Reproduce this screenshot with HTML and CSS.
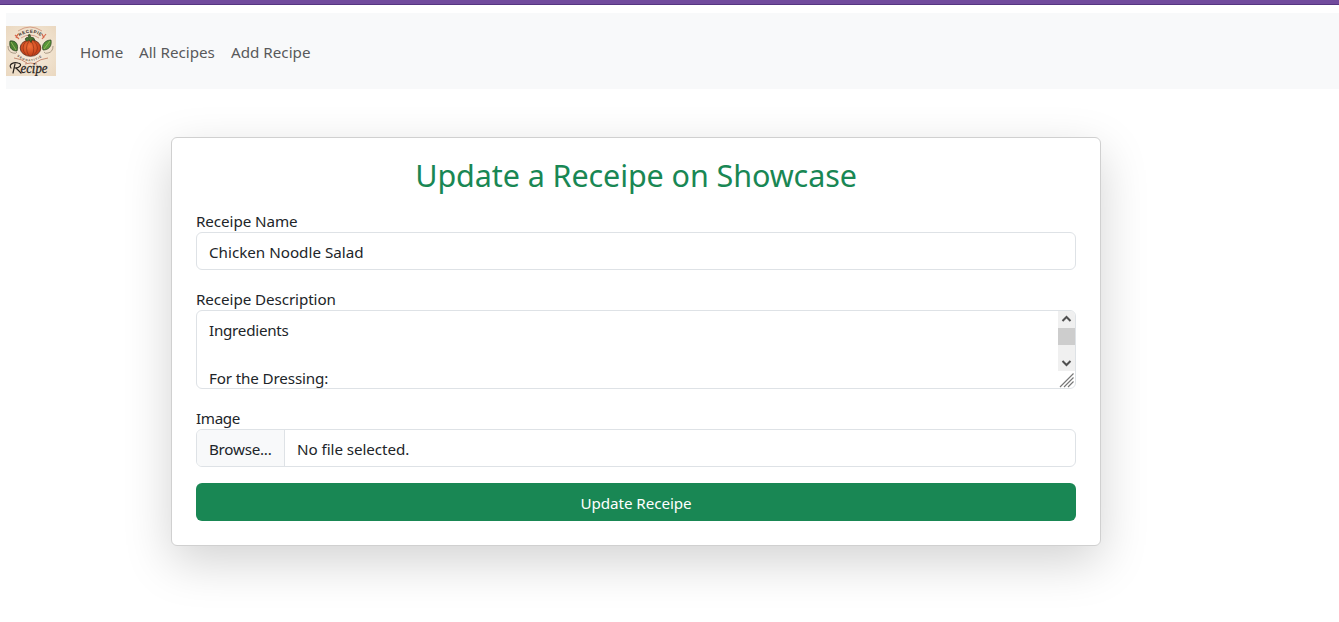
FILE: index.html
```html
<!DOCTYPE html>
<html lang="en">
<head>
<meta charset="utf-8">
<title>Update Receipe</title>
<link rel="stylesheet" href="styles.css">
</head>
<body>
<div class="topbar"></div>
<nav class="navbar">
  <svg class="logo" viewBox="0 0 50 50" role="img" aria-label="Recipe logo">
    <defs>
      <radialGradient id="paper" r=".7"><stop offset="0" stop-color="#f8eedf"/><stop offset="1" stop-color="#ead8c0"/></radialGradient>
      <radialGradient id="pumpkin" cx=".45" cy=".4"><stop offset="0" stop-color="#f2703a"/><stop offset="1" stop-color="#c8451c"/></radialGradient>
      <path id="arc-top" d="M13.500 10.500Q24 3 35.500 10.500"/>
      <path id="arc-bottom" d="M11 30Q24 41 38 29"/>
    </defs>
    <rect width="50" height="50" fill="url(#paper)"/>
    <path d="M12 5Q24-3 36 5M15 12Q24 6 33 12" fill="none" stroke="#c9826a" stroke-width=".7"/>
    <text class="logo-arc" fill="#3b3029"><textPath href="#arc-top" textLength="23">RECEPIE</textPath></text>
    <path d="M9 9l4 4M10 12l2-4M40 8l-4 5M38 12l-2-4" stroke="#d6684d" stroke-width="1.200"/>
    <path d="M4 15C10 14 13 19 11 25C5 25 3 21 4 15Z" fill="#4a8230" stroke="#283c20" stroke-width=".7"/>
    <path d="M45 14C39 14 35 19 37 24C43 24 46 20 45 14Z" fill="#579638" stroke="#283c20" stroke-width=".7"/>
    <path d="M5 16l5 8M44 15l-6 8" stroke="#b2c66c" stroke-width=".7"/>
    <path d="M2 20q0 6 5 7M47 20q0 6-5 7M7 27q3 1 4-1M42 27q-3 1-4-1" fill="none" stroke="#8d7b68" stroke-width=".7"/>
    <ellipse cx="24.500" cy="22" rx="10.300" ry="8.300" fill="url(#pumpkin)" stroke="#572416" stroke-width=".8"/>
    <path d="M20 15Q14 22 20 29M28 15Q35 22 28 29M23 15Q18 22 23 30M25 15Q30 22 26 30" fill="none" stroke="#8f3115" stroke-width=".7"/>
    <path d="M19 13q2-3 4-1l-1-3 2-.5 1 3q3-1 4 3l-3-1-1 3-2-3-2 2z" fill="#467630" stroke="#26391c" stroke-width=".6"/>
    <text class="logo-small" fill="#5b493b"><textPath href="#arc-bottom" textLength="27">SEGNATIVIE</textPath></text>
    <path d="M8 32Q16 33 21 37M42 32Q34 33 29 37M19 38Q24 36 31 38" fill="none" stroke="#bd765c" stroke-width=".8"/>
    <path d="M5 42C2 38 8 36 12 37C17 38 14 42 9 42M9 38L7 47M10 42L15 47" fill="none" stroke="#29241f" stroke-width="1.200" stroke-linecap="round"/>
    <text class="logo-script" x="14.500" y="46.500" textLength="27" lengthAdjust="spacingAndGlyphs">ecipe</text>
  </svg>
  <div class="links">
    <a class="t-home">Home</a><a class="t-all">All Recipes</a><a class="t-add">Add Recipe</a>
  </div>
</nav>
<main class="card">
  <h2>Update a Receipe on Showcase</h2>
  <label class="t-name">Receipe Name</label>
  <div class="control t-value">Chicken Noodle Salad</div>
  <label class="t-desc">Receipe Description</label>
  <div class="control area">
    <div class="area-text"><span class="t-ing">Ingredients</span><br><br><span class="t-dress">For the Dressing:</span></div>
    <div class="scroll">
      <div class="track">
        <svg viewBox="0 0 17 17"><path d="M4.500 10l4-4 4 4"/></svg>
        <div class="thumb"></div>
        <svg class="down" viewBox="0 0 17 17"><path d="M4.500 7l4 4 4-4"/></svg>
      </div>
      <svg class="grip" viewBox="0 0 17 17"><path d="M2 16L15.500 2.500M6 16l9.500-9.500M10 16l5.500-5.500"/></svg>
    </div>
  </div>
  <label class="t-image">Image</label>
  <div class="control file"><span class="browse">Browse...</span><span class="t-file">No file selected.</span></div>
  <div class="submit">Update Receipe</div>
</main>
</body>
</html>
```
FILE: styles.css
```css
* { box-sizing: border-box; }
body { margin: 0; height: 622px; overflow: hidden; background: #fff; color: #212529; font: 15.2px/24px "Noto Sans", sans-serif; white-space: nowrap; }
.topbar { height: 5px; background: #714b9d; border-bottom: 1px solid #563581; }
.navbar { display: flex; align-items: center; height: 76px; margin: 8px 0 0 6px; background: #f8f9fa; }
.logo { width: 50px; height: 50px; display: block; }
.links { display: flex; gap: 16px; margin: 2px 0 0 24px; color: #59595a; }
.t-home { width: 43px; }
.t-all { width: 76px; }
.logo-arc { font: bold 4.5px "Liberation Sans", sans-serif; }
.logo-small { font: bold 3px "Liberation Sans", sans-serif; }
.logo-script { font: italic 14px "Liberation Serif", serif; fill: #29241f; stroke: #29241f; stroke-width: .3px; }
.card { width: 930px; height: 409px; margin: 48px 0 0 171px; padding: 16px 24px 24px; border: 1px solid #d0d0d0; border-radius: 6px; background: #fff; box-shadow: 0 16px 48px rgba(0,0,0,.175); }
h2 { height: 38px; margin: 2px 0 14px; font-size: 30.5px; line-height: 38px; font-weight: 400; letter-spacing: -.09px; color: #198754; text-align: center; }
label { display: block; height: 24px; padding-top: 1px; }
.t-name, .t-desc { letter-spacing: -.08px; }
.t-ing { letter-spacing: -.25px; }
.t-dress { letter-spacing: -.14px; }
.t-image { letter-spacing: -.35px; }
.control { height: 38px; margin-bottom: 16px; padding: 7px 12px 5px; border: 1px solid #dee2e6; border-radius: 6px; overflow: hidden; }
.area { display: flex; justify-content: space-between; height: 79px; padding: 0 0 0 12px; }
.area-text { padding-top: 7px; }
.scroll { width: 17px; }
.track { height: 60px; background: #f0f0f0; }
.track svg, .grip { display: block; width: 17px; height: 17px; fill: none; stroke: #505050; stroke-width: 2; }
.thumb { height: 17px; background: #cdcdcd; }
.track .down { margin-top: 9px; }
.grip { stroke: #777; stroke-width: 1.2; }
.file { display: flex; padding: 0; }
.browse { width: 88px; height: 36px; padding: 7px 0 0 12px; letter-spacing: -.25px; background: #f8f9fa; border-right: 1px solid #dee2e6; }
.t-file { padding: 7px 0 0 12px; letter-spacing: -.06px; }
.submit { height: 38px; padding-top: 8px; border-radius: 6px; letter-spacing: -.06px; background: #198754; color: #fff; text-align: center; }
```
